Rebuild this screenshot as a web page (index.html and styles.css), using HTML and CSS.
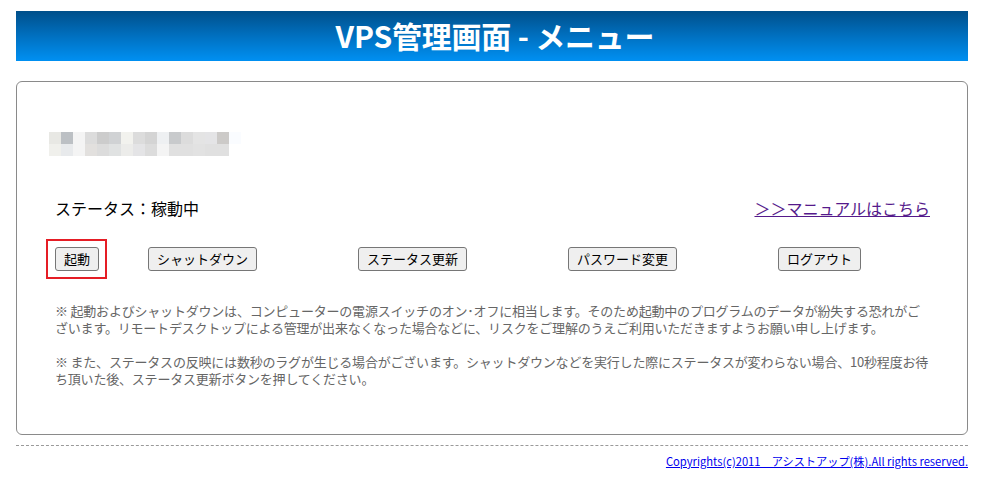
FILE: index.html
```html
<!DOCTYPE html>
<html lang="ja">
<head>
<meta charset="utf-8">
<title>VPS管理画面 - メニュー</title>
<link rel="stylesheet" href="styles.css">
</head>
<body>
<div class="page">
  <h1 class="title">VPS管理画面 - メニュー</h1>
  <div class="box">
    <div class="mosaic">
      <span style="background:#e8e8e4"></span><span style="background:#bcc0c4"></span><span style="background:#f4f4f4"></span><span style="background:#dcdcdc"></span><span style="background:#cccccc"></span><span style="background:#d0d2d4"></span><span style="background:#f2f2ee"></span><span style="background:#dcdcdc"></span><span style="background:#d4d4d4"></span><span style="background:#eef0f2"></span><span style="background:#c8cacc"></span><span style="background:#dcdcdc"></span><span style="background:#e4e4e4"></span><span style="background:#e4e4e6"></span><span style="background:#cccac8"></span><span style="background:#fafcff"></span>
      <span style="background:#f0f0ec"></span><span style="background:#e8eaec"></span><span style="background:#f4f4f4"></span><span style="background:#e2e0de"></span><span style="background:#dcdcdc"></span><span style="background:#e0e2e2"></span><span style="background:#ececea"></span><span style="background:#e4e4e6"></span><span style="background:#dcdcdc"></span><span style="background:#f4f4f4"></span><span style="background:#e0e0e0"></span><span style="background:#e0e0e0"></span><span style="background:#e2e2e2"></span><span style="background:#e0e0e0"></span><span style="background:#e0e0e0"></span><span style="background:#ffffff"></span>
    </div>
    <div class="status-row">
      <span class="status">ステータス：稼動中</span>
      <a class="manual" href="#">＞＞マニュアルはこちら</a>
    </div>
    <div class="buttons">
      <div class="cell"><span class="highlight"><button class="btn">起動</button></span></div>
      <div class="cell"><button class="btn">シャットダウン</button></div>
      <div class="cell"><button class="btn">ステータス更新</button></div>
      <div class="cell"><button class="btn">パスワード変更</button></div>
      <div class="cell"><button class="btn">ログアウト</button></div>
    </div>
    <div class="notes">
      <p>※ 起動およびシャットダウンは、コンピューターの電源スイッチのオン･オフに相当します。そのため起動中のプログラムのデータが紛失する恐れがございます。リモートデスクトップによる管理が出来なくなった場合などに、リスクをご理解のうえご利用いただきますようお願い申し上げます。</p>
      <p>※ また、ステータスの反映には数秒のラグが生じる場合がございます。シャットダウンなどを実行した際にステータスが変わらない場合、10秒程度お待ち頂いた後、ステータス更新ボタンを押してください。</p>
    </div>
  </div>
  <div class="footer">
    <a class="copy" href="#">Copyrights(c)2011　アシストアップ(株).All rights reserved.</a>
  </div>
</div>
</body>
</html>
```

FILE: styles.css
```css
html, body {
  margin: 0;
  padding: 0;
  background: #ffffff;
}
body {
  font-family: "Noto Sans CJK JP", "Noto Sans", sans-serif;
  color: #000;
}
.page {
  padding: 11px 14px 0 16px;
}
.title {
  margin: 0;
  height: 50px;
  line-height: 48px;
  text-align: center;
  color: #ffffff;
  font-size: 30px;
  font-weight: bold;
  letter-spacing: -0.2px;
  padding-left: 6px;
  background: linear-gradient(to bottom, #004f8a 0%, #0070c0 50%, #0090f2 100%);
}
.box {
  margin-top: 20px;
  border: 1px solid #8a8a8a;
  border-radius: 6px;
  padding: 50px 37px 0 29px;
  box-sizing: content-box;
  height: 302px;
}
.mosaic {
  margin-left: 3px;
  display: grid;
  grid-template-columns: repeat(16, 12px);
  grid-template-rows: 12px 12px;
  width: 192px;
}
.mosaic span {
  display: block;
}
.status-row {
  margin-top: 42px;
  margin-left: 9px;
  display: flex;
  justify-content: space-between;
  align-items: center;
  font-size: 16px;
  line-height: 20px;
}
.manual {
  color: #551a8b;
  text-decoration: underline;
}
.buttons {
  margin-top: 21px;
  display: grid;
  grid-template-columns: 102px 210px 210px 210px auto;
  align-items: center;
  height: 40px;
}
.cell {
  display: flex;
  align-items: center;
}
.highlight {
  display: inline-flex;
  border: 2px solid #e51d25;
  padding: 6px 6px 6px 7px;
}
.btn {
  font-family: "Noto Sans CJK JP", sans-serif;
  font-size: 13px;
  line-height: 18px;
  height: 24px;
  padding: 0 8px;
  color: #000;
  background: #efefef;
  border: 1px solid #767676;
  border-radius: 3px;
}
.notes {
  margin-top: 23px;
  margin-left: 9px;
  color: #666666;
  font-size: 13px;
  line-height: 17px;
  letter-spacing: -0.2px;
}
.notes p {
  margin: 0 0 17px 0;
}
.footer {
  margin-top: 10px;
  border-top: 1px dashed #9a9a9a;
  text-align: right;
  padding-top: 6px;
  font-size: 11.2px;
  line-height: 18px;
}
.copy {
  color: #0000ee;
  text-decoration: underline;
}
```
